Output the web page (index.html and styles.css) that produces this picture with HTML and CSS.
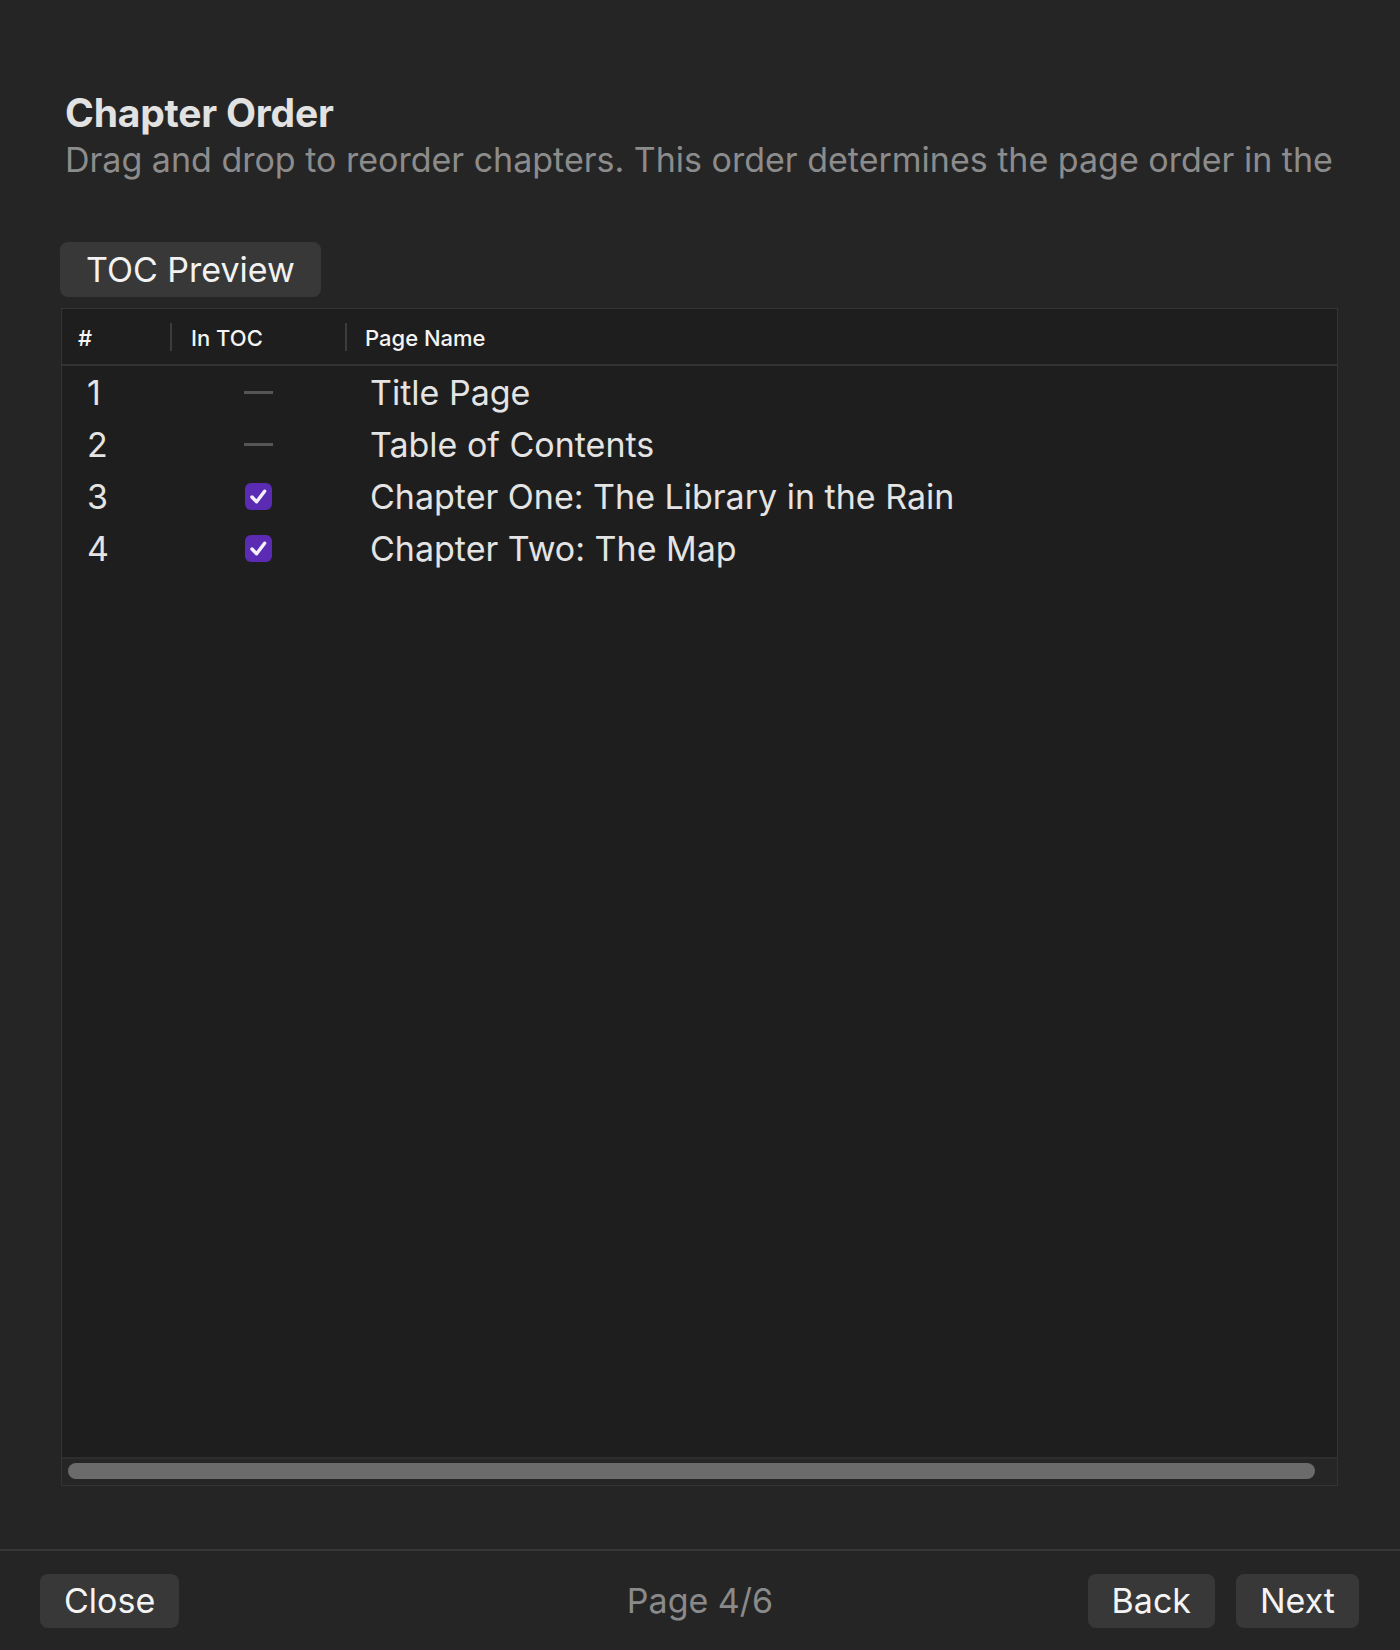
FILE: index.html
```html
<!DOCTYPE html>
<html lang="en">
<head>
<meta charset="utf-8">
<title>Chapter Order</title>
<link rel="stylesheet" href="styles.css">
</head>
<body>
<div class="page">
  <main class="content">
    <h1 class="title">Chapter Order</h1>
    <p class="subtitle">Drag and drop to reorder chapters. This order determines the page order in the</p>
    <div class="tabs"><div class="tab">TOC Preview</div></div>
    <div class="table">
      <div class="thead">
        <div class="th col-num">#</div>
        <div class="th col-toc">In TOC</div>
        <div class="th col-name">Page Name</div>
      </div>
      <div class="tbody">
        <div class="row">
          <div class="td col-num">1</div>
          <div class="td col-toc"><span class="dash"></span></div>
          <div class="td col-name">Title Page</div>
        </div>
        <div class="row">
          <div class="td col-num">2</div>
          <div class="td col-toc"><span class="dash"></span></div>
          <div class="td col-name">Table of Contents</div>
        </div>
        <div class="row">
          <div class="td col-num">3</div>
          <div class="td col-toc"><span class="check"><svg viewBox="0 0 27 27" width="27" height="27"><path d="M7 14 L11.6 18.8 L19.6 8.2" fill="none" stroke="#f4f0fa" stroke-width="3.4" stroke-linecap="round" stroke-linejoin="round"/></svg></span></div>
          <div class="td col-name">Chapter One: The Library in the Rain</div>
        </div>
        <div class="row">
          <div class="td col-num">4</div>
          <div class="td col-toc"><span class="check"><svg viewBox="0 0 27 27" width="27" height="27"><path d="M7 14 L11.6 18.8 L19.6 8.2" fill="none" stroke="#f4f0fa" stroke-width="3.4" stroke-linecap="round" stroke-linejoin="round"/></svg></span></div>
          <div class="td col-name">Chapter Two: The Map</div>
        </div>
      </div>
      <div class="hscroll"><div class="thumb"></div></div>
    </div>
  </main>
  <footer class="footer">
    <button class="btn">Close</button>
    <div class="pager">Page 4/6</div>
    <div class="nav">
      <button class="btn">Back</button>
      <button class="btn">Next</button>
    </div>
  </footer>
</div>
</body>
</html>
```

FILE: styles.css
```css
* { box-sizing: border-box; }
html, body { margin: 0; padding: 0; }
body {
  background: #252525;
  font-family: Inter, "Noto Sans", "Liberation Sans", sans-serif;
  color: #e6e6e6;
}
.page {
  width: 1400px;
  height: 1650px;
  display: flex;
  flex-direction: column;
  overflow: hidden;
}
.content {
  flex: 1;
  display: flex;
  flex-direction: column;
  padding: 90px 62px 0 61px;
  min-height: 0;
}
.title {
  margin: 0 0 0 4px;
  font-size: 39px;
  line-height: 46px;
  font-weight: 700;
  color: #e2e2e2;
  letter-spacing: -0.2px;
}
.subtitle {
  margin: 4px 0 0 4px;
  font-size: 34px;
  line-height: 40px;
  color: #8c8c8c;
  white-space: nowrap;
}
.tabs {
  display: flex;
  margin-top: 62px;
}
.tab {
  background: #383838;
  color: #f2f2f2;
  font-size: 34px;
  line-height: 55px;
  height: 55px;
  padding: 0 26px 0 26px;
  border-radius: 8px;
  margin-left: -1px;
}
.table {
  margin-top: 11px;
  height: 1178px;
  border: 1px solid #343434;
  background: #1e1e1e;
  display: flex;
  flex-direction: column;
}
.thead {
  display: flex;
  align-items: center;
  height: 57px;
  border-bottom: 2px solid #333;
  flex: none;
}
.th {
  font-size: 22px;
  font-weight: 500;
  color: #f4f4f4;
  height: 28px;
  line-height: 30px;
}
.thead .col-toc, .thead .col-name { border-left: 2px solid #3c3c3c; }
.col-num { width: 108px; padding-left: 16px; flex: none; }
.col-toc { width: 175px; padding-left: 19px; flex: none; }
.col-name { flex: 1; padding-left: 18px; white-space: nowrap; }
.tbody { flex: 1; padding-top: 0; }
.row {
  display: flex;
  align-items: center;
  height: 52px;
}
.td {
  font-size: 34px;
  color: #e4e4e4;
}
.row .col-num { padding-left: 25px; }
.row .col-toc { padding-left: 0; display: flex; justify-content: center; padding-right: 0; }
.row .col-name { padding-left: 25px; }
.dash {
  display: block;
  width: 29px;
  height: 3px;
  background: #555;
  margin-left: 1px;
}
.check {
  display: block;
  width: 27px;
  height: 27px;
  border-radius: 6px;
  background: #5b2cb3;
  margin-left: 1px;
}
.check svg { display: block; }
.hscroll {
  flex: none;
  height: 28px;
  background: #262626;
  border-top: 2px solid #2e2e2e;
  padding: 4px 22px 0 6px;
}
.thumb {
  height: 16px;
  border-radius: 8px;
  background: #6b6b6b;
}
.footer {
  flex: none;
  height: 101px;
  border-top: 2px solid #383838;
  margin-top: 63px;
  display: flex;
  align-items: center;
  justify-content: space-between;
  padding: 0 41px 0 40px;
  position: relative;
}
.btn {
  font-family: Inter, "Noto Sans", "Liberation Sans", sans-serif;
  background: #383838;
  color: #f4f4f4;
  border: none;
  border-radius: 8px;
  height: 54px;
  font-size: 34px;
  padding: 0 24px;
}
.nav { display: flex; gap: 21px; }
.pager {
  font-size: 34px;
  color: #8a8a8a;
  position: absolute;
  left: 0;
  right: 0;
  text-align: center;
  pointer-events: none;
}
```
